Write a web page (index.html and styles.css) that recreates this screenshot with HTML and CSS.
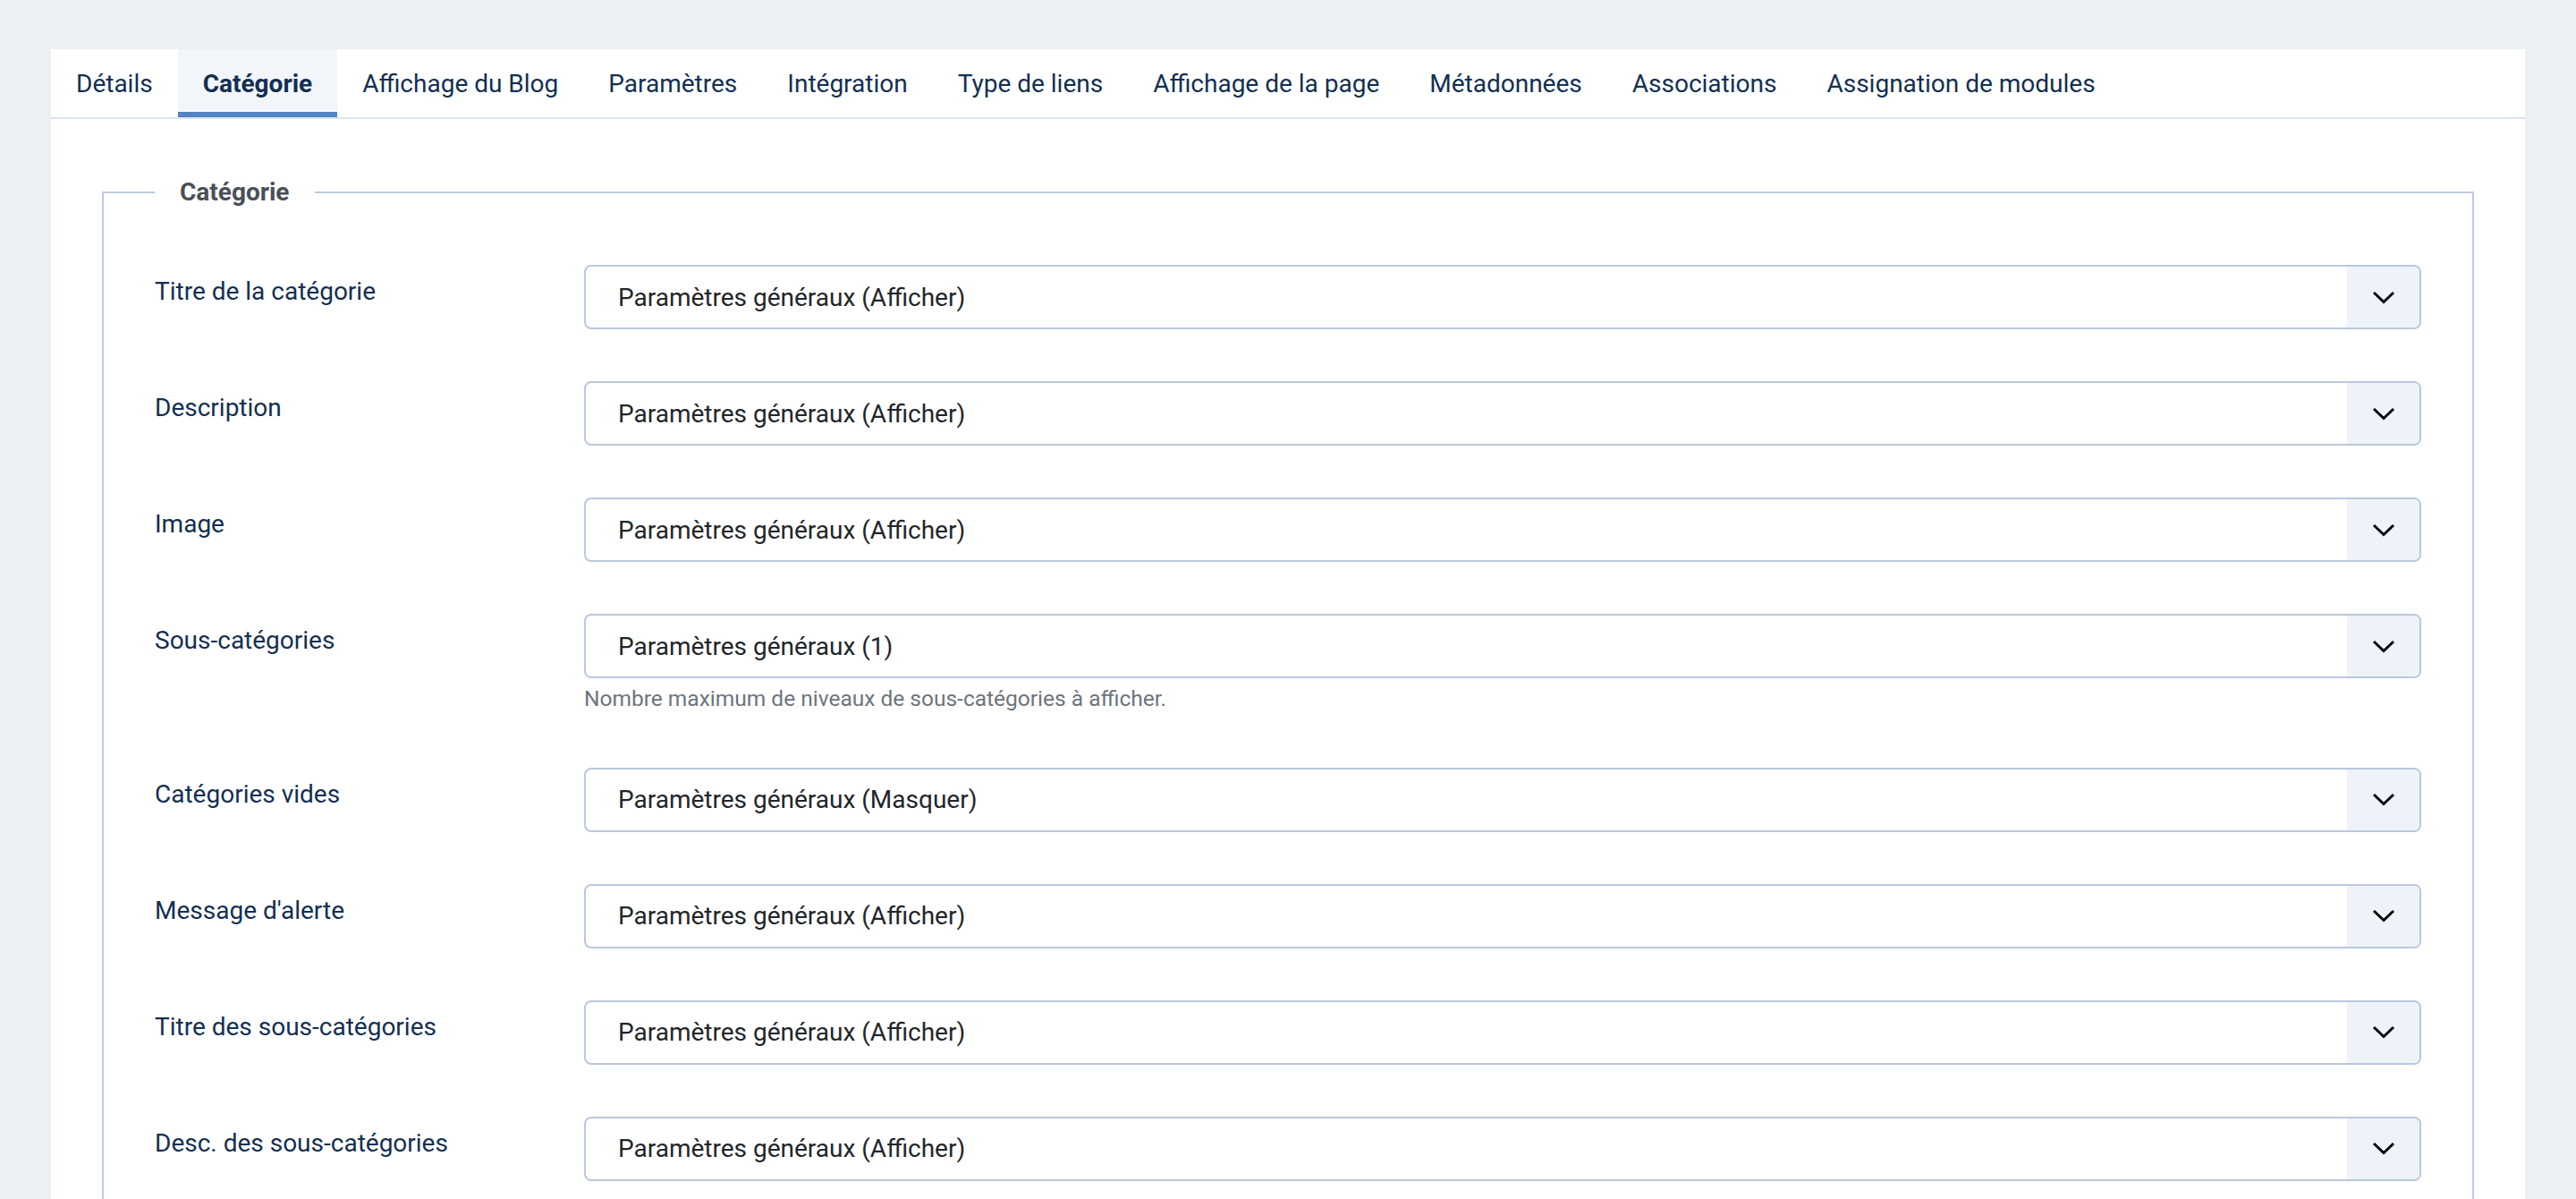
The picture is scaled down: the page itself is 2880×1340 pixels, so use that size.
FILE: index.html
```html
<!DOCTYPE html>
<html lang="fr">
<head>
  <meta charset="utf-8">
  <title>Catégorie</title>
  <link rel="stylesheet" href="styles.css">
</head>
<body>
  <div class="card">
    <div class="tabs">
      <div class="tab">Détails</div>
      <div class="tab active">Catégorie</div>
      <div class="tab">Affichage du Blog</div>
      <div class="tab">Paramètres</div>
      <div class="tab">Intégration</div>
      <div class="tab">Type de liens</div>
      <div class="tab">Affichage de la page</div>
      <div class="tab">Métadonnées</div>
      <div class="tab">Associations</div>
      <div class="tab">Assignation de modules</div>
    </div>

    <div class="card-body">
      <fieldset class="options">
        <legend>Catégorie</legend>

        <div class="control-row">
          <label class="control-label">Titre de la catégorie</label>
          <div class="controls">
            <div class="select">
              <span class="select-value">Paramètres généraux (Afficher)</span>
              <span class="select-caret"><svg width="26" height="15" viewBox="0 0 26 15"><path d="M2 2 L13 12.5 L24 2" fill="none" stroke="#000" stroke-width="3"/></svg></span>
            </div>
          </div>
        </div>

        <div class="control-row">
          <label class="control-label">Description</label>
          <div class="controls">
            <div class="select">
              <span class="select-value">Paramètres généraux (Afficher)</span>
              <span class="select-caret"><svg width="26" height="15" viewBox="0 0 26 15"><path d="M2 2 L13 12.5 L24 2" fill="none" stroke="#000" stroke-width="3"/></svg></span>
            </div>
          </div>
        </div>

        <div class="control-row">
          <label class="control-label">Image</label>
          <div class="controls">
            <div class="select">
              <span class="select-value">Paramètres généraux (Afficher)</span>
              <span class="select-caret"><svg width="26" height="15" viewBox="0 0 26 15"><path d="M2 2 L13 12.5 L24 2" fill="none" stroke="#000" stroke-width="3"/></svg></span>
            </div>
          </div>
        </div>

        <div class="control-row">
          <label class="control-label">Sous-catégories</label>
          <div class="controls">
            <div class="select">
              <span class="select-value">Paramètres généraux (1)</span>
              <span class="select-caret"><svg width="26" height="15" viewBox="0 0 26 15"><path d="M2 2 L13 12.5 L24 2" fill="none" stroke="#000" stroke-width="3"/></svg></span>
            </div>
            <div class="help">Nombre maximum de niveaux de sous-catégories à afficher.</div>
          </div>
        </div>

        <div class="control-row">
          <label class="control-label">Catégories vides</label>
          <div class="controls">
            <div class="select">
              <span class="select-value">Paramètres généraux (Masquer)</span>
              <span class="select-caret"><svg width="26" height="15" viewBox="0 0 26 15"><path d="M2 2 L13 12.5 L24 2" fill="none" stroke="#000" stroke-width="3"/></svg></span>
            </div>
          </div>
        </div>

        <div class="control-row">
          <label class="control-label">Message d'alerte</label>
          <div class="controls">
            <div class="select">
              <span class="select-value">Paramètres généraux (Afficher)</span>
              <span class="select-caret"><svg width="26" height="15" viewBox="0 0 26 15"><path d="M2 2 L13 12.5 L24 2" fill="none" stroke="#000" stroke-width="3"/></svg></span>
            </div>
          </div>
        </div>

        <div class="control-row">
          <label class="control-label">Titre des sous-catégories</label>
          <div class="controls">
            <div class="select">
              <span class="select-value">Paramètres généraux (Afficher)</span>
              <span class="select-caret"><svg width="26" height="15" viewBox="0 0 26 15"><path d="M2 2 L13 12.5 L24 2" fill="none" stroke="#000" stroke-width="3"/></svg></span>
            </div>
          </div>
        </div>

        <div class="control-row">
          <label class="control-label">Desc. des sous-catégories</label>
          <div class="controls">
            <div class="select">
              <span class="select-value">Paramètres généraux (Afficher)</span>
              <span class="select-caret"><svg width="26" height="15" viewBox="0 0 26 15"><path d="M2 2 L13 12.5 L24 2" fill="none" stroke="#000" stroke-width="3"/></svg></span>
            </div>
          </div>
        </div>
      </fieldset>
    </div>
  </div>
</body>
</html>
```

FILE: styles.css
```css
/* Page */
html, body {
  margin: 0;
  padding: 0;
}

body {
  background: #ebf0f5;
  font-family: Roboto, "Liberation Sans", sans-serif;
  color: #1c2f50;
  padding: 55px 57px;
}

.card {
  background: #ffffff;
}

/* Tabs */
.tabs {
  display: flex;
  border-bottom: 2px solid #dde5f0;
}

.tab {
  height: 76px;
  padding: 0 28px;
  display: flex;
  align-items: center;
  font-size: 28px;
  color: #132f53;
  white-space: nowrap;
}

.tab.active {
  background: #f2f6fa;
  font-weight: 700;
  box-shadow: inset 0 -6px 0 #5283c3;
}

/* Fieldset */
.card-body {
  padding: 61px 57px 0 57px;
}

.options {
  margin: 0;
  padding: 60px 57px 0 57px;
  border: 2px solid #bccbe0;
  min-width: 0;
}

.options legend {
  padding: 0 28px;
  font-size: 28px;
  line-height: 1.5;
  font-weight: 700;
  color: #495057;
}

.control-row {
  display: grid;
  grid-template-columns: 480px 1fr;
  margin-bottom: 58px;
}

.control-label {
  padding-top: 9px;
  font-size: 28px;
  line-height: 1.5;
  color: #132f53;
}

/* Select */
.select {
  height: 72px;
  box-sizing: border-box;
  border: 2px solid #b9c8dd;
  border-radius: 8px;
  display: flex;
  align-items: center;
  overflow: hidden;
  background: #ffffff;
}

.select-value {
  flex: 1;
  padding-left: 36px;
  font-size: 28px;
  color: #22262a;
}

.select-caret {
  width: 81px;
  align-self: stretch;
  background: #eef3fa;
  display: flex;
  align-items: center;
  justify-content: center;
}

.help {
  margin-top: 5px;
  font-size: 24.5px;
  line-height: 1.5;
  color: #6c757d;
}
```
